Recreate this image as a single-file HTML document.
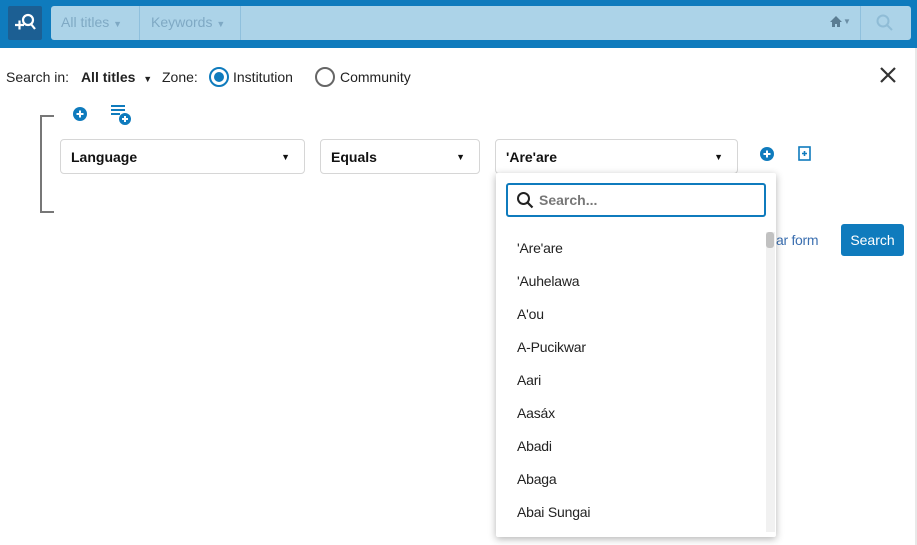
<!DOCTYPE html><html><head><style>
*{box-sizing:border-box;margin:0;padding:0}
body{width:917px;height:545px;overflow:hidden;background:#fff;font-family:"Liberation Sans",Arial,sans-serif;position:relative;font-size:14px;color:#222}
.a{position:absolute}
.sel{position:absolute;border:1px solid #d6d6d6;border-radius:4px;height:35px;top:139px;font-weight:bold;font-size:14px;padding:9px 10px;color:#111}
.sel:after{content:"▼";position:absolute;right:14px;top:12px;font-size:9px}
.it{position:absolute;left:517px;font-size:14px;color:#222;letter-spacing:-0.2px}
</style></head><body>
<div class="a" style="left:0;top:0;width:917px;height:48px;background:#0f7bbd"></div>
<div class="a" style="left:8px;top:6px;width:34px;height:34px;background:#1c5f93;border-radius:2px"></div>
<svg class="a" style="left:12px;top:9px" width="26" height="28" viewBox="0 0 26 28"><circle cx="16" cy="11" r="5" fill="none" stroke="#fff" stroke-width="2.2"/><path d="M19 15l4 5M3 16h9M7.5 11.5v9" stroke="#fff" stroke-width="2.2"/></svg>
<div class="a" style="left:51px;top:6px;width:860px;height:34px;background:#acd3e8;border-radius:3px"></div>
<div class="a" style="left:139px;top:6px;width:1px;height:34px;background:#8fc0dd"></div>
<div class="a" style="left:240px;top:6px;width:1px;height:34px;background:#8fc0dd"></div>
<div class="a" style="left:860px;top:6px;width:1px;height:34px;background:#8fc0dd"></div>
<div class="a" style="left:61px;top:14px;color:#7fa9c4;font-size:14px">All titles <span style="font-size:9px">▼</span></div>
<div class="a" style="left:151px;top:14px;color:#7fa9c4;font-size:14px">Keywords <span style="font-size:9px">▼</span></div>
<svg class="a" style="left:830px;top:15px" width="12" height="12"><path d="M6 1L0 7h2v5h3V9h2v3h3V7h2z" fill="#5b7d93"/></svg>
<div class="a" style="left:843px;top:17px;color:#6b8ea5;font-size:8px">▼</div>
<svg class="a" style="left:876px;top:14px" width="18" height="18"><circle cx="7" cy="7" r="5.5" fill="none" stroke="#8fbcd6" stroke-width="2"/><path d="M11 11l5 5" stroke="#8fbcd6" stroke-width="2"/></svg>
<div class="a" style="left:915px;top:48px;width:2px;height:497px;background:#e8e8e8"></div>
<div class="a" style="left:6px;top:69px">Search in: <b style="margin-left:8px">All titles</b> <span style="font-size:9px;margin-left:4px">▼</span></div>
<div class="a" style="left:162px;top:69px">Zone:</div>
<div class="a" style="left:209px;top:67px;width:20px;height:20px;border:2px solid #0f7bbd;border-radius:50%"><div style="margin:3px;width:10px;height:10px;border-radius:50%;background:#0f7bbd"></div></div>
<div class="a" style="left:233px;top:69px">Institution</div>
<div class="a" style="left:315px;top:67px;width:20px;height:20px;border:2px solid #666;border-radius:50%"></div>
<div class="a" style="left:340px;top:69px">Community</div>
<svg class="a" style="left:880px;top:67px" width="16" height="16"><path d="M1 1l14 14M15 1L1 15" stroke="#333" stroke-width="2.2"/></svg>
<div class="a" style="left:40px;top:115px;width:14px;height:98px;border:2px solid #777;border-right:none"></div>
<svg class="a" style="left:72px;top:106px" width="16" height="16"><circle cx="8" cy="8" r="7" fill="#0f7bbd"/><path d="M4.5 8h7M8 4.5v7" stroke="#fff" stroke-width="2"/></svg>
<svg class="a" style="left:110px;top:104px" width="22" height="22"><path d="M1 2h14M1 6h14M1 10h9" stroke="#0f7bbd" stroke-width="2"/><circle cx="15" cy="15" r="6" fill="#0f7bbd"/><path d="M12 15h6M15 12v6" stroke="#fff" stroke-width="2"/></svg>
<div class="sel" style="left:60px;width:245px">Language</div>
<div class="sel" style="left:320px;width:160px">Equals</div>
<div class="sel" style="left:495px;width:243px">'Are'are</div>
<svg class="a" style="left:759px;top:146px" width="16" height="16"><circle cx="8" cy="8" r="7" fill="#0f7bbd"/><path d="M4.5 8h7M8 4.5v7" stroke="#fff" stroke-width="2"/></svg>
<svg class="a" style="left:798px;top:146px" width="14" height="16"><rect x="1" y="1" width="11" height="13" fill="none" stroke="#0f7bbd" stroke-width="1.6"/><path d="M4 7.5h5M6.5 5v5" stroke="#0f7bbd" stroke-width="1.6"/></svg>
<div class="a" style="left:776px;top:232px;color:#3b6fb0;letter-spacing:-0.3px">ar form</div>
<div class="a" style="left:841px;top:224px;width:63px;height:32px;background:#0f7bbd;border-radius:3px;color:#fff;font-size:14px;text-align:center;line-height:32px">Search</div>
<div class="a" style="left:496px;top:173px;width:280px;height:364px;background:#fff;box-shadow:0 2px 8px rgba(0,0,0,.3);border-radius:2px"></div>
<div class="a" style="left:506px;top:183px;width:260px;height:34px;border:2px solid #0f7bbd;border-radius:3px"></div>
<svg class="a" style="left:516px;top:191px" width="20" height="20"><circle cx="7.5" cy="7.5" r="5.5" fill="none" stroke="#222" stroke-width="2"/><path d="M11.5 11.5l5 5" stroke="#222" stroke-width="2.2"/></svg>
<div class="a" style="left:539px;top:192px;color:#777;font-weight:bold">Search...</div>
<div class="a" style="left:766px;top:232px;width:9px;height:300px;background:#f1f1f1"></div>
<div class="a" style="left:766px;top:232px;width:8px;height:16px;background:#c1c1c1;border-radius:3px"></div>
<div class="it" style="top:240px">'Are'are</div>
<div class="it" style="top:273px">'Auhelawa</div>
<div class="it" style="top:306px">A'ou</div>
<div class="it" style="top:339px">A-Pucikwar</div>
<div class="it" style="top:372px">Aari</div>
<div class="it" style="top:405px">Aasáx</div>
<div class="it" style="top:438px">Abadi</div>
<div class="it" style="top:471px">Abaga</div>
<div class="it" style="top:504px">Abai Sungai</div>
</body></html>
